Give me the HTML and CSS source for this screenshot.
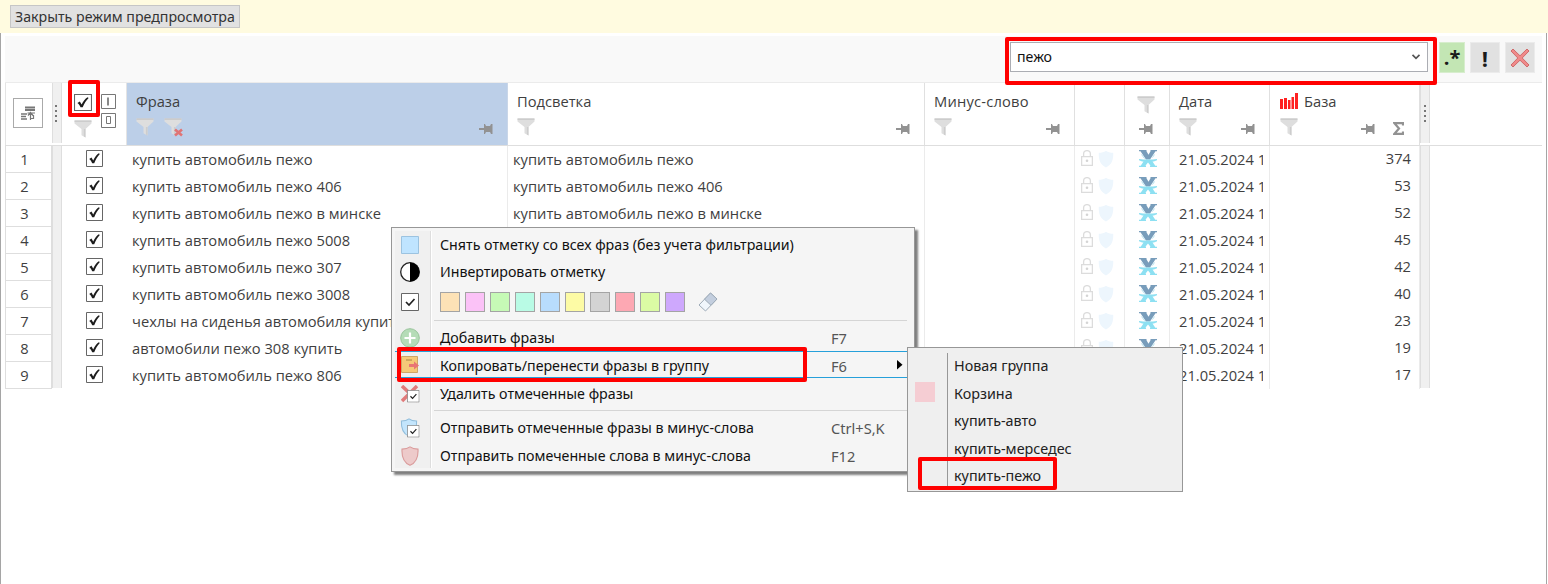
FILE: index.html
```html
<!DOCTYPE html>
<html lang="ru">
<head>
<meta charset="utf-8">
<title>Предпросмотр фраз</title>
<link rel="stylesheet" href="styles.css">
</head>
<body>
<svg class="defs" width="0" height="0" aria-hidden="true">
  <symbol id="funnel" viewBox="0 0 18 18"><path d="M.5.5h17v3l-6 5.500v8.500l-4-2.200V9L.5 3.500z" fill="#dedede"/><path d="M.5.5h17v1.200H.5z" fill="#c4c4c4"/><path d="M11.500 9v8.500l-1.600-.9V9z" fill="#cdcdcd"/></symbol>
  <symbol id="pin" viewBox="0 0 14 12"><path d="M0 5h5V1h1l1 2h4l1-2h1.500v10H12l-1-2H7l-1 2H5V7H0z" fill="#929292"/></symbol>
  <symbol id="check" viewBox="0 0 17 17"><path d="M.5.5h16v16H.5z" fill="#fff" stroke="#666"/><path d="M3.200 9l2.300-1.400 1.700 2.800c1.500-3 3.300-5.700 5.600-7.200l1 .9c-2.300 2.500-4 5.300-5.600 9.200H6.200C5.500 11.500 4.500 10 3.200 9z" fill="#1c1c1c"/></symbol>
  <symbol id="tick" viewBox="0 0 18 18"><path d="M.5.5h17v17H.5z" fill="#fff" stroke="#666"/><path d="M5 9l3 3 5.500-6" fill="none" stroke="#222" stroke-width="1.700"/></symbol>
  <symbol id="lock" viewBox="0 0 12 16"><path d="M.6 6.600h10.800v8.800H.6zM2.600 6.500V4a3.400 3.400 0 0 1 6.800 0v2.500" fill="none" stroke="#dcdcdc" stroke-width="1.300"/><circle cx="6" cy="10.800" r="1.300" fill="#d4d4d4"/></symbol>
  <symbol id="shield" viewBox="0 0 16 18"><path d="M8 .8c2 1.600 4.300 2 7.200 2 .4 7-1.500 12-7.200 14.600C2.300 14.800.4 9.800.8 2.800c2.900 0 5.200-.4 7.200-2z"/></symbol>
  <symbol id="xmark" viewBox="0 0 18 18"><path d="M0 0h7.500v1.300L9.500 4.800l2-3.500V0H18v1.300h-1.500L11 9.500H7L1.500 1.300H0z" fill="#789dbb"/><path d="M2.500 4.500l3 4M15.500 4.500l-2 3" stroke="#b4e2ef" fill="none"/><path d="M0 9c3 .3 5 .6 9 .6s6-.3 9-.6v1.300c-1.800.9-3.300 1.200-4.500 1.300l2.800 4.100H18V17h-7v-1.300h.6L9 12.500l-2.600 3.200H7V17H0v-1.300h1.700l2.800-4.100C3.300 11.500 1.800 11.200 0 10.300z" fill="#8de0f2"/></symbol>
</svg>

<div class="preview-bar"><button class="preview-close"><span>Закрыть режим предпросмотра</span></button></div>

<main class="panel">
  <div class="toolbar">
    <div class="search"><span>пежо</span><svg width="10" height="6" viewBox="0 0 10 6"><path d="M1.500.8L5 4.300 8.500.8" fill="none" stroke="#555" stroke-width="1.700"/></svg></div>
    <div class="tool regex">.*</div>
    <div class="tool exact">!</div>
    <div class="tool clear"><svg width="20" height="20" viewBox="0 0 20 20"><path d="M1 3l2-2 7 6.800L17 1l2 2-6.800 7 6.800 7-2 2-7-6.800L3 19l-2-2 6.800-7z" fill="#f08a8a" stroke="#cf6b6b"/></svg></div>
  </div>

  <div class="grid head">
    <div class="h-num"><span class="group-btn"><svg width="14" height="14" viewBox="0 0 14 14"><path d="M4 1.500h10M4 4h10" stroke="#777" stroke-width="2"/><path d="M0 8h6M0 10.500h5M0 13h6" stroke="#777" stroke-width="1.500"/><path d="M9.500 14V6.500M6.500 7h7.500M7 9.500l2.500-3 2.500 3M9 12.500h3.500V9" stroke="#777" stroke-width="1.200" fill="none"/></svg></span></div>
    <div class="split"><i class="dots"></i></div>
    <div class="h-check">
      <div class="stack"><svg width="18" height="17" viewBox="0 0 17 17" preserveAspectRatio="none"><use href="#check"/></svg><svg width="18" height="18"><use href="#funnel"/></svg></div>
      <div class="stack marks"><svg width="15" height="15" viewBox="0 0 15 15"><path d="M.5.5h14v14H.5z" fill="#fff" stroke="#777"/><path d="M7 3.500v8" stroke="#888" stroke-width="2"/></svg><svg width="15" height="15" viewBox="0 0 15 15"><path d="M.5.5h14v14H.5z" fill="#fff" stroke="#777"/><path d="M5.500 3.500h4v7h-4z" fill="none" stroke="#777"/></svg></div>
    </div>
    <div class="h phrase"><b>Фраза</b><div class="tools"><svg width="18" height="18"><use href="#funnel"/></svg><svg class="second" width="19" height="19" viewBox="0 0 19 19"><use href="#funnel" width="18" height="18"/><path d="M11 11.500l7 6M18 11.500l-7 6" stroke="#e07474" stroke-width="2.600"/></svg><svg class="pin" width="14" height="12"><use href="#pin"/></svg></div></div>
    <div class="h"><b>Подсветка</b><div class="tools"><svg width="18" height="18"><use href="#funnel"/></svg><svg class="pin" width="14" height="12"><use href="#pin"/></svg></div></div>
    <div class="h minus"><b>Минус-слово</b><div class="tools"><svg width="18" height="18"><use href="#funnel"/></svg><svg class="pin" width="14" height="12"><use href="#pin"/></svg></div></div>
    <div class="h"></div>
    <div class="h src"><svg width="18" height="18"><use href="#funnel"/></svg><svg width="14" height="12"><use href="#pin"/></svg></div>
    <div class="h date"><b>Дата</b><div class="tools"><svg width="18" height="18"><use href="#funnel"/></svg><svg class="pin" width="14" height="12"><use href="#pin"/></svg></div></div>
    <div class="h base"><b><svg width="18" height="17" viewBox="0 0 18 17"><path d="M0 6h3v10H0zM4 5h3v11H4zM8 7h2.500v9H8zM11.500 4H14v12h-2.500zM15 0h3v16h-3z" fill="#f22"/></svg>База</b><div class="tools"><svg width="18" height="18"><use href="#funnel"/></svg><svg class="pin" width="14" height="12"><use href="#pin"/></svg><svg class="sum" width="11" height="13" viewBox="0 0 11 13"><path d="M10 3.500V1.200H1.500L6 6.500l-4.500 5.300H10V9.500" fill="none" stroke="#929292" stroke-width="2.200"/></svg></div></div>
    <div class="split right"><i class="dots"></i></div>
  </div>

  <div class="rows" id="rows"></div>
</main>

<section class="menu">
  <div class="item"><i><svg width="18" height="18"><path d="M.5.500h17v17H.5z" fill="#bfe4ff" stroke="#9cc3e0"/></svg></i><span>Снять отметку со всех фраз (без учета фильтрации)</span></div>
  <div class="item"><i><svg width="20" height="20" viewBox="0 0 20 20"><circle cx="10" cy="10" r="9.300" fill="#fff" stroke="#222" stroke-width="1.300"/><path d="M10 .5a9.500 9.500 0 0 1 0 19z"/></svg></i><span>Инвертировать отметку</span></div>
  <div class="item palette"><i><svg width="18" height="18"><use href="#tick"/></svg></i>
    <div class="swatches"><u class="c1"></u><u class="c2"></u><u class="c3"></u><u class="c4"></u><u class="c5"></u><u class="c6"></u><u class="c7"></u><u class="c8"></u><u class="c9"></u><u class="c10"></u>
    <svg width="20" height="20" viewBox="0 0 20 20"><path d="M1 13L12.500 1 19 7 7.500 19z" fill="#f0f6fc" stroke="#9eabb8"/><path d="M6.500 7.200L12.500 1 19 7l-6 6.300z" fill="#c3cede" stroke="#9eabb8"/></svg></div></div>
  <hr>
  <div class="item add"><i><svg width="20" height="20" viewBox="0 0 20 20"><circle cx="10" cy="10" r="9.300" fill="#b5dcb7" stroke="#97c49a"/><path d="M10 4.500v11M4.500 10h11" stroke="#fff" stroke-width="2.200"/></svg></i><span>Добавить фразы</span><kbd>F7</kbd></div>
  <div class="item active"><i><svg width="18" height="17" viewBox="0 0 18 17"><path d="M.5.500h16v16H.5z" fill="#f5c978" stroke="#cfa567"/><path d="M5 4h6" stroke="#a98445"/><path d="M8 8h5V5.500l5 4-5 4V11H8z" fill="#e97575"/></svg></i><span>Копировать/перенести фразы в группу</span><kbd>F6</kbd><svg class="arrow" width="6" height="10"><path d="M0 0l5.500 4.700L0 9.500z"/></svg></div>
  <div class="item delete"><i><svg width="19" height="18" viewBox="0 0 19 18"><path d="M1 1l16 15M16 1L1 16" stroke="#e17b7b" stroke-width="3.500"/><svg x="6" y="5" width="12.500" height="12.500" viewBox="0 0 18 18"><use href="#tick"/></svg></svg></i><span>Удалить отмеченные фразы</span></div>
  <hr>
  <div class="item"><i><svg width="20" height="20" viewBox="0 0 20 20"><use href="#shield" width="18" height="19" fill="#c3e5fc" stroke="#91bddb"/><svg x="7" y="7" width="12.500" height="12.500" viewBox="0 0 18 18"><use href="#tick"/></svg></svg></i><span>Отправить отмеченные фразы в минус-слова</span><kbd>Ctrl+S,K</kbd></div>
  <div class="item"><i><svg width="18" height="20" fill="#edcaca" stroke="#da9b9b"><use href="#shield"/></svg></i><span>Отправить помеченные слова в минус-слова</span><kbd>F12</kbd></div>
</section>

<section class="submenu">
  <div class="gutter"></div>
  <ul><li>Новая группа</li><li>Корзина</li><li>купить-авто</li><li>купить-мерседес</li><li>купить-пежо</li></ul>
</section>

<div class="mark mark-search"></div>
<div class="mark mark-check"></div>
<div class="mark mark-copy"></div>
<div class="mark mark-group"></div>
<script src="rows.js"></script>
</body>
</html>
```

FILE: rows.js
```js
const phrases = [
  ["купить автомобиль пежо", 374],
  ["купить автомобиль пежо 406", 53],
  ["купить автомобиль пежо в минске", 52],
  ["купить автомобиль пежо 5008", 45],
  ["купить автомобиль пежо 307", 42],
  ["купить автомобиль пежо 3008", 40],
  ["чехлы на сиденья автомобиля купить", 23],
  ["автомобили пежо 308 купить", 19],
  ["купить автомобиль пежо 806", 17]
];

document.getElementById("rows").innerHTML = phrases.map(([text, base], i) => `
  <div class="grid row">
    <div class="num">${i + 1}</div>
    <div class="split"></div>
    <div class="ck"><svg width="17" height="17"><use href="#check"/></svg></div>
    <div class="cell"><span>${text}</span></div>
    <div class="cell"><span>${i < 3 ? text : ""}</span></div>
    <div class="cell"></div>
    <div class="cell flags"><svg width="12" height="16"><use href="#lock"/></svg><svg width="16" height="18" fill="#edf6fd"><use href="#shield"/></svg></div>
    <div class="cell mark-x"><svg width="18" height="18"><use href="#xmark"/></svg></div>
    <div class="cell when"><span>21.05.2024 1</span></div>
    <div class="cell value">${base}</div>
    <div class="split right"></div>
  </div>`).join("");
```

FILE: styles.css
```css
* { box-sizing: border-box; }
body {
  margin: 0;
  width: 1548px;
  height: 584px;
  overflow: hidden;
  position: relative;
  background: #fff;
  color: #3f3f3f;
  font: 14.700px/20px "Open Sans", "Noto Sans", sans-serif;
}
svg { display: block; flex: none; }
.defs { position: absolute; }

.preview-bar { height: 33px; padding: 5px 10px; background: #fffbe0; }
.preview-close {
  display: block;
  width: 230px;
  height: 23px;
  padding: 0 0 0 4px;
  border: 1px solid #c6c6c6;
  background: #e1e1e1;
  color: #333;
  font: 14.200px/20px "Noto Sans", sans-serif;
  text-align: left;
  white-space: nowrap;
}

.panel {
  height: 551px;
  margin-right: 1px;
  padding: 3px 4px 0 4px;
  border: solid #a5a5a5;
  border-width: 0 1px;
}
.toolbar {
  display: flex;
  height: 47px;
  padding: 6px 7px 0 1005px;
  background: #f9f9f9;
  border-bottom: 1px solid #ebebeb;
}
.search {
  display: flex;
  align-items: center;
  justify-content: space-between;
  width: 418px;
  height: 30px;
  padding: 0 6px;
  border: 1px solid #abadb3;
  background: #fff;
  color: #111;
  font: 14.200px/20px "Noto Sans", sans-serif;
}
.tool {
  display: flex;
  align-items: center;
  justify-content: center;
  width: 30px;
  height: 31px;
  margin-left: 5px;
  background: #e1e1e1;
  border: 1px solid #ebebeb;
  color: #1a1a1a;
  font-weight: 700;
  font-size: 22px;
}
.regex { width: 26px; margin-left: 11px; background: #c3e6b4; border-color: #d7edcd; font-size: 20px; }

.grid {
  display: grid;
  grid-template-columns: 47px 10px 65px 381px 417px 150px 50px 45px 100px 150px 10px;
}
.head { height: 63px; border-bottom: 1px solid #dedede; }
.h-num { padding: 15px 0 0 7px; border-left: 1px solid #e4e4e4; }
.group-btn {
  display: flex;
  align-items: center;
  justify-content: center;
  width: 30px;
  height: 30px;
  border: 1px solid #aaa;
}
.split { background: #f0f0f0; border: solid #dedede; border-width: 0 1px; }
.head .split { height: 60px; display: flex; padding: 22px 0 0 2px; }
.head .right { padding-left: 3px; }
.dots { width: 2px; height: 17px; background: repeating-linear-gradient(#777 0 2px, transparent 2px 5px); }
.h-check { display: flex; gap: 9px; padding: 11px 0 0 12px; border-right: 1px solid #e4e4e4; }
.stack { display: flex; flex-direction: column; gap: 9px; }
.marks { gap: 4px; }
.h { display: flex; flex-direction: column; border-right: 1px solid #e0e0e0; padding: 8px 0 0 9px; }
.h b { display: flex; gap: 6px; height: 20px; font-weight: 400; line-height: 20px; }
.minus b { letter-spacing: .2px; }
.phrase { background: #bccfe8; border-color: #c9d6e8; }
.tools { display: flex; padding-top: 7px; }
.second { margin-left: 10px; }
.tools .pin { margin: 5px 14px 0 auto; }
.src { align-items: center; gap: 9px; padding: 13px 3px 0 0; }
.base { padding-left: 10px; }
.base .tools .pin { margin-right: 18px; }
.sum { margin: 4px 15px 0 0; }
.base b svg { margin-top: 2px; }

.row { height: 27px; }
.num { padding: 3px 8px 0 0; border: solid #dedede; border-width: 0 1px 1px; text-align: center; }
.ck { padding: 4px 0 0 24px; }
.cell { overflow: hidden; padding: 3px 0 0 5px; border-right: 1px solid #ebebeb; white-space: nowrap; }
.flags { display: flex; gap: 5px; padding: 4px 0 0 6px; }
.mark-x { padding: 4px 0 0 14px; }
.when { padding-left: 9px; }
.when span { display: block; width: 84px; overflow: hidden; }
.value { padding: 2px 8px 0 0; text-align: right; }
.rows .row:last-child .split { height: 26px; }

.menu {
  position: absolute;
  left: 391px;
  top: 227px;
  width: 524px;
  height: 245px;
  padding: 3px 3px 0;
  border: 1px solid #979797;
  background: linear-gradient(90deg, #f0f0f0 35px, #dedede 35px 36px, #fff 36px 37px, #f5f5f5 37px) 3px 3px / 513px 237px no-repeat #f5f5f5;
  box-shadow: 3px 3px 2px rgba(0, 0, 0, .5);
  color: #111;
  font: 14.220px/20px "Noto Sans", sans-serif;
}
.item { position: relative; display: flex; align-items: center; height: 28px; padding-left: 5px; white-space: nowrap; }
.item:nth-child(-n+2) { height: 27px; }
.item:nth-child(-n+2) span { padding-top: 1px; }
.item i { display: flex; justify-content: center; width: 20px; margin-right: 20px; }
.item kbd { margin-left: auto; width: 80px; color: #555; font: inherit; font-size: 14.600px; }
.item.palette { height: 32px; padding-top: 2px; }
.swatches { display: flex; gap: 5px; }
.swatches u { width: 20px; height: 20px; border: 1px solid #a4a4a4; }
.swatches svg { margin-left: 8px; }
.c1 { background: #fde2b6; } .c2 { background: #fbc2f7; } .c3 { background: #c6fab6; } .c4 { background: #b9fbe5; } .c5 { background: #b8dcfd; }
.c6 { background: #fdfba5; } .c7 { background: #d3d3d3; } .c8 { background: #fda8b3; } .c9 { background: #dbfba4; } .c10 { background: #cea8fd; }
.menu hr { margin: 3px 4px 3px 39px; border: 0; border-top: 1px solid #d5d5d5; }
.menu .add { height: 27px; padding-top: 1px; }
.menu .active { height: 27px; border-top: 1px solid #26a0da; border-bottom: 1px solid #26a0da; }
.active span, .active kbd { padding-top: 2px; }
.delete { margin-top: 2px; }
.delete + hr { margin-top: 2px; }
.arrow { position: absolute; left: 502px; }

.submenu {
  position: absolute;
  left: 907px;
  top: 347px;
  display: flex;
  width: 276px;
  height: 145px;
  padding: 5px 0;
  border: 1px solid #979797;
  background: #efefef;
  color: #222;
  font: 14.350px/27.500px "Noto Sans", sans-serif;
}
.gutter { width: 40px; border-right: 1px solid #979797; padding: 29px 0 0 7px; }
.gutter::before { content: ""; display: block; width: 20px; height: 20px; background: #f5cdd3; }
.submenu ul { margin: -1px 0 0; padding: 0 0 0 6px; list-style: none; }

.mark { position: absolute; border: 4px solid #f00; border-radius: 2px; }
.mark-search { left: 1005px; top: 37px; width: 432px; height: 48px; }
.mark-check { left: 68px; top: 80px; width: 32px; height: 37px; }
.mark-copy { left: 397px; top: 347px; width: 410px; height: 35px; }
.mark-group { left: 918px; top: 457px; width: 139px; height: 33px; }
```
